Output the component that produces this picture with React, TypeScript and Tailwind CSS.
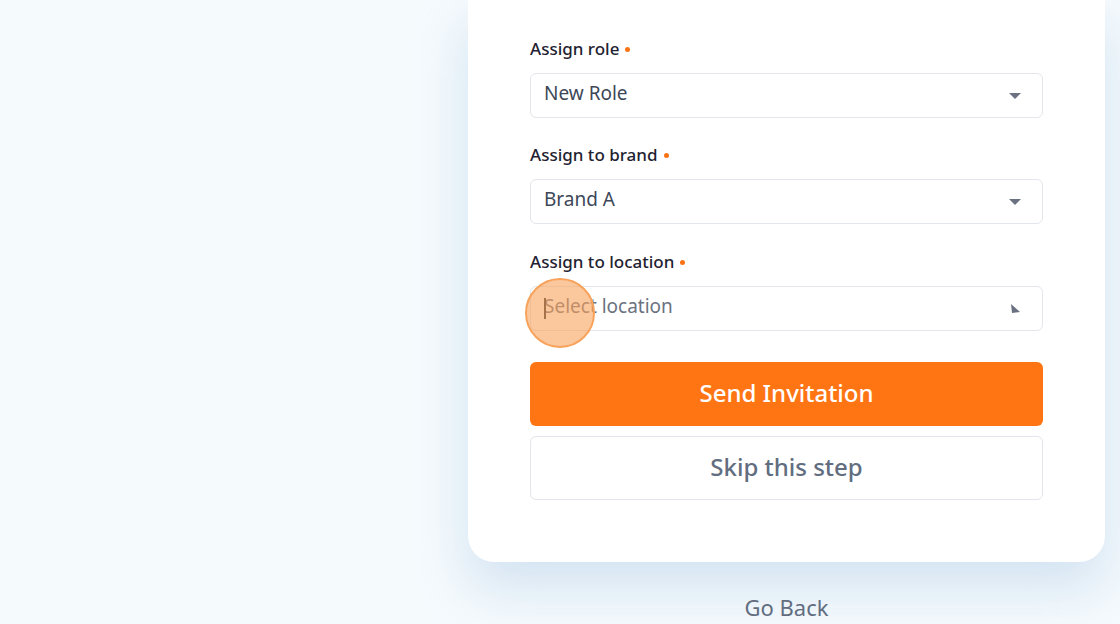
import React from 'react';

const font = { fontFamily: '"Noto Sans", "Open Sans", sans-serif' };

function Caret({ tilted }: { tilted?: boolean }) {
  if (tilted) {
    return (
      <svg width="12" height="12" viewBox="0 0 12 12" className="text-gray-500">
        <polygon points="1,1 10,9 2,10" fill="currentColor" />
      </svg>
    );
  }
  return (
    <svg width="14" height="8" viewBox="0 0 14 8" className="text-gray-500">
      <polygon points="1,1 13,1 7,7" fill="currentColor" />
    </svg>
  );
}

function Field({
  label,
  value,
  placeholder,
  tilted,
  focused,
}: {
  label: string;
  value?: string;
  placeholder?: string;
  tilted?: boolean;
  focused?: boolean;
}) {
  return (
    <div className="flex flex-col gap-3">
      <div className="flex items-center gap-1.5 text-[17px] leading-6 font-medium text-[#1f2230]">
        <span>{label}</span>
        <span className="h-[5px] w-[5px] rounded-full bg-[#f97316]" />
      </div>
      <div className="relative flex h-[45px] items-center justify-between rounded-md border border-[#e3e6ea] bg-white pl-[13px] pr-[20px]">
        {focused && <span className="absolute left-[13px] top-[11px] h-[21px] w-[2px] bg-[#2b2b2b]" />}
        <span className={value ? 'pb-[4px] text-[19px] text-[#3d4758]' : 'pb-[4px] text-[19px] text-[#6b7280]'}>
          {value ?? placeholder}
        </span>
        <Caret tilted={tilted} />
      </div>
    </div>
  );
}

export default function App() {
  return (
    <div className="relative h-[624px] w-[1120px] overflow-hidden bg-[#f5fafd]" style={font}>
      <div className="flex flex-col items-start pl-[468px]">
        <div className="flex w-[637px] flex-col rounded-b-[26px] bg-white px-[62px] pt-[37px] pb-[62px] shadow-[0_26px_50px_rgba(170,200,228,0.45)]">
          <Field label="Assign role" value="New Role" />
          <div className="h-[25px]" />
          <Field label="Assign to brand" value="Brand A" />
          <div className="h-[26px]" />
          <Field label="Assign to location" placeholder="Select location" tilted focused />
          <button className="mt-[31px] h-[64px] rounded-md bg-[#ff7514] pb-[3px] text-[24px] font-medium text-white">
            Send Invitation
          </button>
          <button className="mt-[10px] h-[64px] rounded-md border border-[#e3e6ea] bg-white pb-[3px] text-[24px] font-medium text-[#626d80]">
            Skip this step
          </button>
        </div>
        <div className="mt-[31px] w-[637px] text-center text-[22px] leading-[28px] text-[#626d80]">Go Back</div>
      </div>
      <div className="pointer-events-none absolute left-[525px] top-[278px] h-[70px] w-[70px] rounded-full border-2 border-[#f7a35c] bg-[#f9a25a]/60" />
    </div>
  );
}
